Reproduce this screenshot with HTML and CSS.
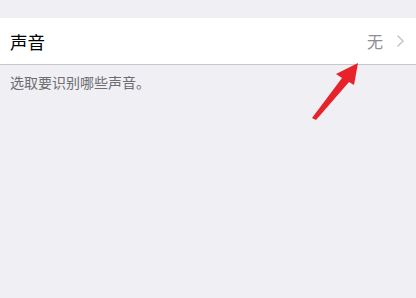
FILE: index.html
```html
<!DOCTYPE html>
<html lang="zh">
<head>
<meta charset="utf-8">
<link rel="stylesheet" href="styles.css">
</head>
<body>
<div class="page">
  <div class="group">
    <div class="row">
      <span class="label">声音</span>
      <span class="value">无</span>
      <svg class="chevron" width="7" height="12" viewBox="0 0 7 12"><path d="M1 1 L6 6 L1 11" fill="none" stroke="#c7c7cc" stroke-width="1.6" stroke-linecap="round" stroke-linejoin="round"/></svg>
    </div>
  </div>
  <div class="caption">选取要识别哪些声音。</div>
  <svg class="arrow" width="416" height="298" viewBox="0 0 416 298"><polygon points="358,63 354,85 349,82 316,120 312,118 342,78 336,74" fill="#e8222b"/></svg>
</div>
</body>
</html>
```
FILE: styles.css
```css
html, body {
  margin: 0;
  padding: 0;
  background: #efeff4;
}
.page {
  position: relative;
  width: 416px;
  height: 298px;
  font-family: "Noto Sans CJK SC", "Noto Sans", sans-serif;
  padding-top: 18px;
  box-sizing: border-box;
}
.group {
  background: #fff;
  border-bottom: 1px solid #c8c7cc;
}
.row {
  height: 46px;
  display: flex;
  align-items: center;
  padding: 0 12px 0 10px;
}
.label {
  font-size: 17.5px;
  color: #000;
  flex: 1;
}
.value {
  font-size: 16px;
  color: #8e8e93;
  margin-right: 14px;
}
.chevron {
  display: block;
}
.caption {
  margin-top: 8px;
  padding-left: 10px;
  font-size: 14px;
  line-height: 19px;
  color: #6d6d72;
}
.arrow {
  position: absolute;
  left: 0;
  top: 0;
}
```
